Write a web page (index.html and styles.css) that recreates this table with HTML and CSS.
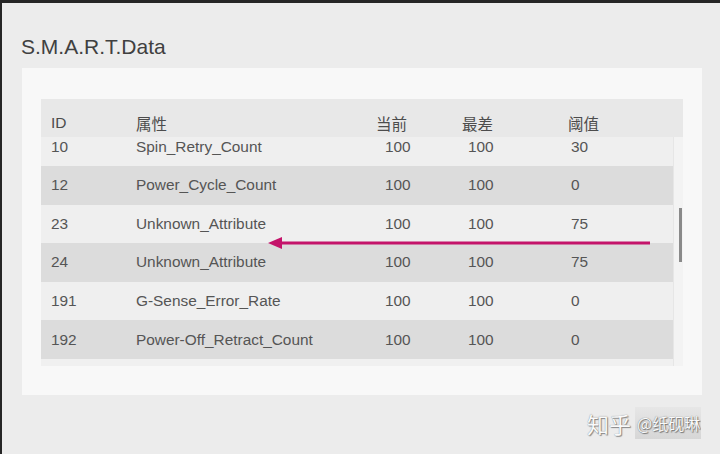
FILE: index.html
```html
<!DOCTYPE html>
<html lang="zh">
<head>
<meta charset="utf-8">
<title>S.M.A.R.T.Data</title>
<link rel="stylesheet" href="styles.css">
</head>
<body>
<div class="screen">
  <h1 class="title">S.M.A.R.T.Data</h1>
  <div class="panel">
    <div class="table">
      <div class="row head">
        <div>ID</div><div>属性</div><div>当前</div><div>最差</div><div>阈值</div>
      </div>
      <div class="body">
        <div class="rows">
          <div class="list">
            <div class="row light"><div>10</div><div>Spin_Retry_Count</div><div class="c3">100</div><div class="c4">100</div><div class="c5">30</div></div>
            <div class="row dark"><div>12</div><div>Power_Cycle_Count</div><div class="c3">100</div><div class="c4">100</div><div class="c5">0</div></div>
            <div class="row light"><div>23</div><div>Unknown_Attribute</div><div class="c3">100</div><div class="c4">100</div><div class="c5">75</div></div>
            <div class="row dark"><div>24</div><div>Unknown_Attribute</div><div class="c3">100</div><div class="c4">100</div><div class="c5">75</div></div>
            <div class="row light"><div>191</div><div>G-Sense_Error_Rate</div><div class="c3">100</div><div class="c4">100</div><div class="c5">0</div></div>
            <div class="row dark"><div>192</div><div>Power-Off_Retract_Count</div><div class="c3">100</div><div class="c4">100</div><div class="c5">0</div></div>
          </div>
        </div>
        <div class="track"><div class="thumb"></div></div>
      </div>
    </div>
  </div>
  <svg class="arrow" width="390" height="16" viewBox="0 0 390 16">
    <line x1="10" y1="8" x2="382" y2="8" stroke="#c4136a" stroke-width="3"/>
    <polygon points="0,8 14,2 14,14" fill="#c4136a"/>
  </svg>
  <div class="mark">
    <span class="zh">知乎</span>
    <span class="tag">@纸砚琳</span>
  </div>
</div>
</body>
</html>
```
FILE: styles.css
```css
* { box-sizing: border-box; }
html, body { margin: 0; }
body {
  background: #262626;
  padding: 3px 0 0 2px;
  width: 720px;
  height: 454px;
  overflow: hidden;
  font-family: "Liberation Sans", Arial, "Noto Sans CJK SC", sans-serif;
}
.screen {
  position: relative;
  height: 451px;
  background: #ececec;
  padding: 32px 0 0 19px;
}
.title {
  margin: 0;
  font-weight: normal;
  font-size: 21px;
  line-height: 24px;
  color: #404040;
}
.panel {
  margin-top: 9px;
  margin-left: 1px;
  width: 680px;
  height: 327px;
  background: #f8f8f8;
  padding: 31px 0 0 19px;
}
.table {
  width: 642px;
  color: #555555;
  font-size: 15.4px;
}
.row {
  display: grid;
  grid-template-columns: 85px 240px 86px 106px 1fr;
  padding-left: 10px;
  align-items: center;
}
.head {
  height: 38px;
  background: #e8e8e8;
  padding-top: 10px;
  line-height: 28px;
  font-family: "Noto Sans CJK SC", "Liberation Sans", sans-serif;
  font-size: 15.5px;
  color: #4c4c4c;
}
.head > div:first-child { font-family: "Liberation Sans", Arial, sans-serif; }
.body {
  display: flex;
  height: 229px;
  background: #f0f0f0;
}
.rows {
  flex: 1;
  overflow: hidden;
}
.list { margin-top: -9.6px; }
.row.light, .row.dark { height: 38.6px; }
.light { background: #efefef; }
.dark { background: #dcdcdc; }
.c3 { padding-left: 9px; }
.c4 { padding-left: 6px; }
.c5 { padding-left: 3px; }
.track {
  width: 10px;
  background: #f3f3f3;
  border-left: 1px solid #e6e6e6;
  padding-top: 71px;
}
.thumb {
  width: 3px;
  height: 54px;
  margin-left: 5px;
  background: #8a8a8a;
}
.arrow {
  position: absolute;
  left: 266px;
  top: 232px;
}
.mark {
  position: absolute;
  left: 585px;
  top: 404px;
  display: flex;
  align-items: center;
  gap: 4px;
}
.zh {
  font-family: "Noto Sans CJK SC", sans-serif;
  font-size: 22px;
  color: #fafafa;
  text-shadow: 0 0 1px #777, 1px 1px 1px #888;
}
.tag {
  font-family: "Noto Sans CJK SC", sans-serif;
  font-size: 16px;
  color: #fafafa;
  text-shadow: 0 0 1px #666, 1px 1px 1px #777;
  background: linear-gradient(#e6e6e6, #d6d6d6);
  padding: 4px 2px;
  height: 32px;
  line-height: 24px;
  width: 66px;
  white-space: nowrap;
  overflow: hidden;
}
```
